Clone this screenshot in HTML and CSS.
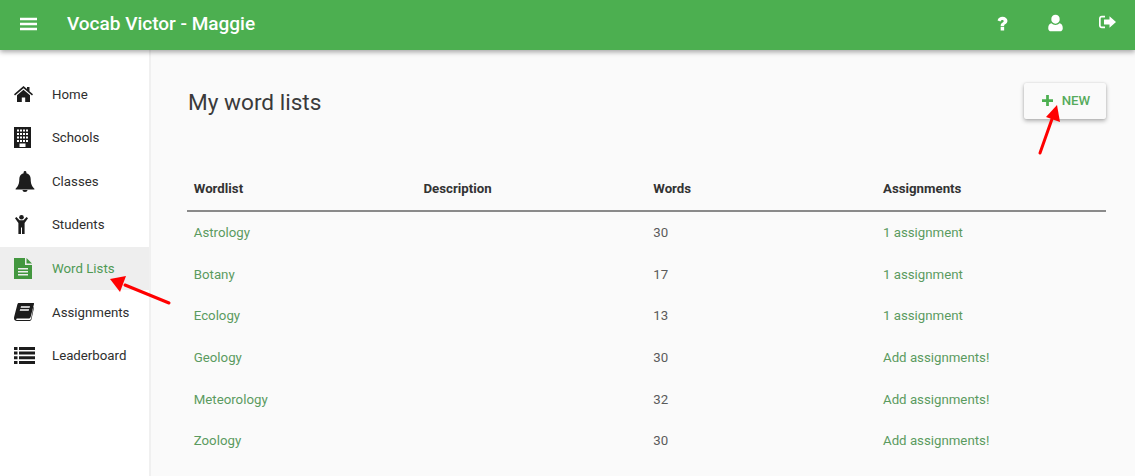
FILE: index.html
```html
<!DOCTYPE html>
<html lang="en">
<head>
<meta charset="utf-8">
<title>Vocab Victor</title>
<link rel="stylesheet" href="styles.css">
</head>
<body>
<header class="topbar">
  <svg class="menu-icon" viewBox="0 0 18 16"><path d="M0 1.500h18v2.600H0zM0 6.700h18v2.600H0zM0 11.900h18v2.600H0z"/></svg>
  <h1 class="app-title">Vocab Victor - Maggie</h1>
  <div class="top-actions">
    <span class="top-btn"><svg class="ti-q" viewBox="0 0 12 16"><path d="M.6 4.600C1.300 1.800 3.300.5 6 .5c3 0 5.400 1.800 5.400 4.500 0 2.100-1.300 3.100-2.500 3.900-.8.500-1.100.9-1.100 1.800H4c0-1.800.6-2.700 1.900-3.500.9-.6 1.400-1 1.400-1.800 0-.8-.6-1.300-1.500-1.300-1 0-1.600.6-2 1.700zM4 11.600h3.800v3.900H4z"/></svg></span>
    <span class="top-btn"><svg class="ti-u" viewBox="0 0 14 16"><path d="M7 .2a3.900 3.900 0 0 1 3.900 4.200A3.900 3.900 0 0 1 7 8.600a3.900 3.900 0 0 1-3.900-4.200A3.900 3.900 0 0 1 7 .2zM3.300 8.200C4.300 9.200 5.500 9.800 7 9.800s2.700-.6 3.700-1.600c2 .3 3.100 1.900 3.100 4.700 0 1.900-1.100 2.900-2.600 2.900H2.800C1.300 15.800.2 14.800.2 12.900c0-2.800 1.100-4.400 3.100-4.700z"/></svg></span>
    <span class="top-btn"><svg class="ti-o" viewBox="0 0 17 14"><path d="M6 .8v1.700H3C2.200 2.500 1.700 3 1.700 3.800v6.400c0 .8.500 1.300 1.300 1.300h3v1.700H2.800C1.200 13.200 0 12 0 10.400V3.600C0 2 1.200.8 2.800.8z"/><path d="M10.500 1.200 17 7l-6.500 5.800V9.500H5V4.500h5.500z"/></svg></span>
  </div>
</header>
<div class="shell">
  <nav class="sidebar">
    <a class="nav-item"><span class="nav-icon"><svg width="19" height="16" viewBox="0 0 19 16"><path d="M9.500 0 13 3V1h2.500v4.200L19 8.200l-1 1.200-8.500-7.200L1 9.400 0 8.200z"/><path d="M9.500 3.700 16 9.200V16h-4.800v-4.500H7.800V16H3V9.200z"/></svg></span>Home</a>
    <a class="nav-item"><span class="nav-icon"><svg width="17" height="21" viewBox="0 0 17 21"><path fill-rule="evenodd" d="M0 0h17v21H0zM3 2.500v2h2v-2zm3 0v2h2v-2zm3 0v2h2v-2zm3 0v2h2v-2zM3 6v2h2V6zm3 0v2h2V6zm3 0v2h2V6zm3 0v2h2V6zM3 9.500v2h2v-2zm3 0v2h2v-2zm3 0v2h2v-2zm3 0v2h2v-2zM3 13v2h2v-2zm3 0v2h2v-2zm3 0v2h2v-2zm3 0v2h2v-2zM5.500 16.500V20h6v-3.500z"/></svg></span>Schools</a>
    <a class="nav-item"><span class="nav-icon"><svg class="ic-bell" width="20" height="21" viewBox="0 0 20 21"><path d="M10 0c.8 0 1.400.6 1.400 1.400v.9c2.700.6 4.300 2.800 4.300 5.700 0 4.700 1 6.900 3.700 9.700v.8H.6v-.8C3.300 14.900 4.300 12.700 4.300 8c0-2.900 1.600-5.100 4.300-5.700v-.9C8.600.6 9.200 0 10 0zM7.500 19h5c0 1.200-1.100 2-2.500 2s-2.500-.8-2.500-2z"/></svg></span>Classes</a>
    <a class="nav-item"><span class="nav-icon"><svg class="ic-child" width="13" height="19" viewBox="0 0 13 19"><circle cx="6.500" cy="2.300" r="2.300"/><path d="M1.400 2 4.500 5.300h4L11.600 2 13 3.300 9.600 8v11H7v-6.500H6V19H3.400V8L0 3.300z"/></svg></span>Students</a>
    <a class="nav-item active"><span class="nav-icon"><svg width="18" height="21" viewBox="0 0 18 21"><path fill-rule="evenodd" d="M0 0h11v7h7v14H0zM4 10v1.500h10V10zm0 3v1.500h10V13zm0 3v1.500h10V16z"/><path d="M12.500 0 18 5.500h-5.500z"/></svg></span>Word Lists</a>
    <a class="nav-item"><span class="nav-icon"><svg width="20" height="18" viewBox="0 0 20 18"><path fill-rule="evenodd" d="M5 0h14.500c.5 0 .6.500.5 1L16.800 13.500c-.4 1.600-1.300 2.100-2.800 2.100H3.300c-.8 0-1.200.3-1.200.7 0 .5.500.7 1.200.7h12c.8 0 1.400-.4 1.700-1.300L19.500 4l.5.400-2.500 11.800c-.3 1.200-1.200 1.800-2.300 1.800H3c-1.700 0-3-1-3-2.800 0-.6.100-1.300.3-2L3.300 1.700C3.500.7 4 0 5 0zm2 3.300-.4 1.500h9l.4-1.500zM6.100 6.300l-.4 1.500h9l.4-1.500z"/></svg></span>Assignments</a>
    <a class="nav-item"><span class="nav-icon"><svg width="21" height="17" viewBox="0 0 21 17"><path d="M0 0h3.500v3H0zM5 0h16v3H5zM0 4.600h3.500v3H0zM5 4.600h16v3H5zM0 9.300h3.500v3H0zM5 9.300h16v3H5zM0 14h3.500v3H0zM5 14h16v3H5z"/></svg></span>Leaderboard</a>
  </nav>
  <main class="content">
    <div class="page-head">
      <h2 class="page-title">My word lists</h2>
      <button class="new-btn"><svg class="plus" viewBox="0 0 12 12"><path d="M4.500 0h3v4.500H12v3H7.500V12h-3V7.500H0v-3h4.500z"/></svg>NEW</button>
    </div>
    <table class="lists">
      <thead>
        <tr><th>Wordlist</th><th>Description</th><th>Words</th><th>Assignments</th></tr>
      </thead>
      <tbody>
        <tr><td><a>Astrology</a></td><td></td><td>30</td><td><a>1 assignment</a></td></tr>
        <tr><td><a>Botany</a></td><td></td><td>17</td><td><a>1 assignment</a></td></tr>
        <tr><td><a>Ecology</a></td><td></td><td>13</td><td><a>1 assignment</a></td></tr>
        <tr><td><a>Geology</a></td><td></td><td>30</td><td><a>Add assignments!</a></td></tr>
        <tr><td><a>Meteorology</a></td><td></td><td>32</td><td><a>Add assignments!</a></td></tr>
        <tr><td><a>Zoology</a></td><td></td><td>30</td><td><a>Add assignments!</a></td></tr>
      </tbody>
    </table>
  </main>
</div>
<svg class="annotations" width="1135" height="476" viewBox="0 0 1135 476">
  <path class="arrow-line" d="M169 303 125 285"/>
  <path class="arrow-head" d="M110 279 126 276 120 292z"/>
  <path class="arrow-line" d="M1040 153 1052 119"/>
  <path class="arrow-head" d="M1057 105 1060 122 1046 117z"/>
</svg>
</body>
</html>
```
FILE: styles.css
```css
* { box-sizing: border-box; }
html, body { margin: 0; height: 100%; overflow: hidden; }
body {
  font-family: Roboto, "Liberation Sans", sans-serif;
  font-size: 13.25px;
  color: #333;
  background: #fafafa;
  display: flex;
  flex-direction: column;
}
.topbar {
  height: 50px;
  flex: none;
  background: #4caf50;
  color: #fff;
  display: flex;
  align-items: center;
  padding-left: 20px;
  box-shadow: 0 2px 5px rgba(0, 0, 0, .35);
  position: relative;
  z-index: 2;
}
.topbar svg { fill: #fff; display: block; }
.menu-icon { width: 17px; height: 16px; margin-top: -3px; }
.app-title {
  margin: -3px 0 0 30px;
  font-size: 19px;
  font-weight: 500;
  line-height: 50px;
}
.top-actions { margin-left: auto; display: flex; align-items: center; padding-right: 1px; margin-top: -3px; }
.top-btn { width: 52.5px; display: flex; justify-content: center; }
.ti-q { width: 11px; height: 15px; }
.ti-u { width: 15px; height: 18px; margin-top: -1px; }
.ti-o { width: 17px; height: 14px; margin-top: -3px; }
.shell { flex: 1; display: flex; min-height: 0; }
.sidebar {
  width: 151px;
  flex: none;
  background: #fff;
  border-right: 2px solid #f0f0f0;
  padding-top: 22.4px;
}
.nav-item {
  display: flex;
  align-items: center;
  height: 43.6px;
  font-weight: 450;
  color: #2e2e2e;
}
.nav-item.active { background: #eee; color: #4f9a55; }
.nav-icon {
  width: 52px;
  padding-left: 14px;
  flex: none;
  display: flex;
  align-items: center;
}
.nav-icon svg { fill: #1c1c1c; display: block; }
.nav-icon .ic-bell { margin-left: 1px; }
.nav-icon .ic-child { margin-left: 1px; }
.active .nav-icon svg { fill: #43973f; }
.content { flex: 1; padding: 33px 29px 0 36px; min-width: 0; }
.page-head { display: flex; justify-content: space-between; align-items: flex-start; height: 84px; }
.page-title { margin: 7px 0 0 1px; font-size: 22.6px; font-weight: 400; line-height: 26px; color: #3a3a3a; }
.new-btn {
  width: 82px;
  height: 36px;
  border: 0;
  border-radius: 2px;
  background: #fafafa;
  color: #56ab5c;
  font: 500 13.25px Roboto, "Liberation Sans", sans-serif;
  display: flex;
  align-items: center;
  justify-content: center;
  gap: 9px;
  box-shadow: 0 2px 4px rgba(0, 0, 0, .3), 0 0 2px rgba(0, 0, 0, .12);
  padding: 0 0 1px 2px;
}
.plus { width: 11px; height: 11px; fill: #4caf50; display: block; }
.lists { width: 100%; border-collapse: collapse; table-layout: fixed; }
.lists th {
  text-align: left;
  font-weight: 700;
  height: 44px;
  padding: 0 6.75px;
  color: #333;
  border-bottom: 2px solid #8a8a8a;
}
.lists td { height: 41.7px; padding: 1px 6.75px 0; color: #5a5a5a; }
.lists a { color: #5a9a60; }
.annotations { position: absolute; left: 0; top: 0; pointer-events: none; z-index: 3; }
.arrow-line { stroke: #f00; stroke-width: 3; stroke-linecap: round; fill: none; }
.arrow-head { fill: #f00; }
```
